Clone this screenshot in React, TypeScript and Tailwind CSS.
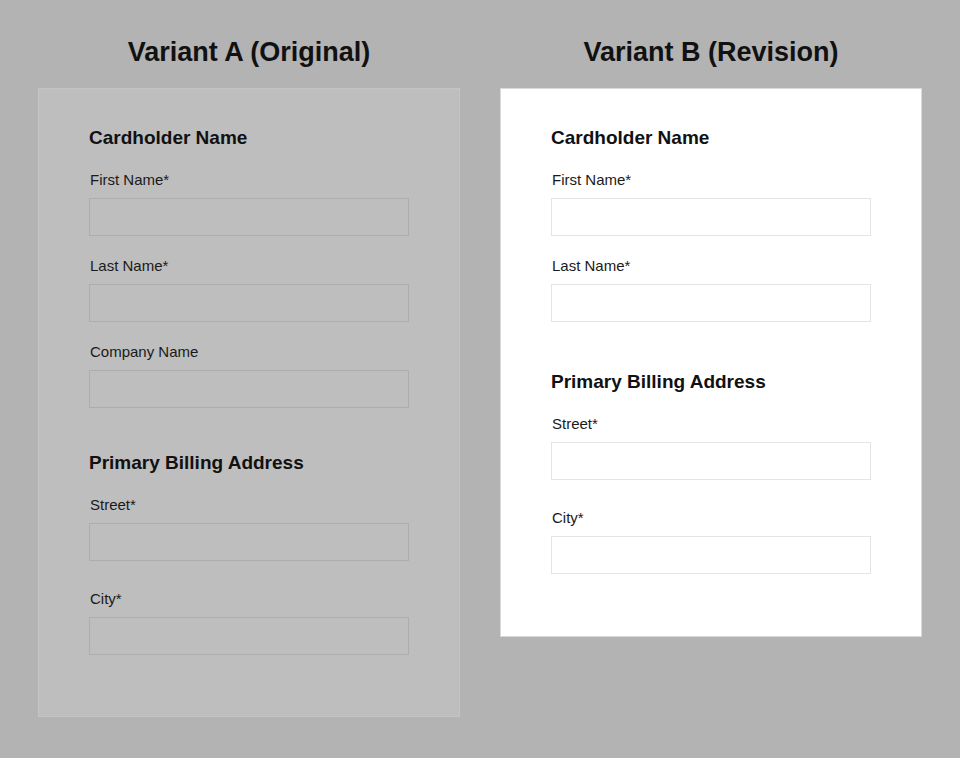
import React from "react";

const font = { fontFamily: '"Liberation Sans", Arial, sans-serif' };

function Field({ label, variant, className = "" }: { label: string; variant: "a" | "b"; className?: string }) {
  return (
    <div className={className}>
      <div className="h-[18px] pl-px text-[15px] leading-[20px] text-[#1a1a1a]">{label}</div>
      <div
        className={
          variant === "a"
            ? "mt-[10px] h-[38px] w-[320px] border border-[#adadad] bg-[#bebebe]"
            : "mt-[10px] h-[38px] w-[320px] border border-[#e4e4e4] bg-white"
        }
      />
    </div>
  );
}

function Heading({ children, className = "" }: { children: React.ReactNode; className?: string }) {
  return <div className={"h-[22px] text-[19px] font-bold leading-[24px] text-[#111] " + className}>{children}</div>;
}

export default function App() {
  return (
    <div className="min-h-[758px] w-[960px] bg-[#b3b3b3]" style={font}>
      <div className="flex gap-[40px] pl-[38px] pt-[37px]">
        <div className="flex w-[422px] flex-col">
          <div className="h-[30px] text-center text-[27px] font-bold leading-[30px] text-[#111]">Variant A (Original)</div>
          <div className="mt-[21px] border border-[#c4c4c4] bg-[#bebebe] px-[50px] pb-[61px] pt-[37px]">
            <Heading>Cardholder Name</Heading>
            <Field label="First Name*" variant="a" className="mt-[22px]" />
            <Field label="Last Name*" variant="a" className="mt-[20px]" />
            <Field label="Company Name" variant="a" className="mt-[20px]" />
            <Heading className="mt-[43px]">Primary Billing Address</Heading>
            <Field label="Street*" variant="a" className="mt-[22px]" />
            <Field label="City*" variant="a" className="mt-[28px]" />
          </div>
        </div>
        <div className="flex w-[422px] flex-col">
          <div className="h-[30px] text-center text-[27px] font-bold leading-[30px] text-[#111]">Variant B (Revision)</div>
          <div className="mt-[21px] border border-[#d9d9d9] bg-white px-[50px] pb-[62px] pt-[37px]">
            <Heading>Cardholder Name</Heading>
            <Field label="First Name*" variant="b" className="mt-[22px]" />
            <Field label="Last Name*" variant="b" className="mt-[20px]" />
            <Heading className="mt-[48px]">Primary Billing Address</Heading>
            <Field label="Street*" variant="b" className="mt-[22px]" />
            <Field label="City*" variant="b" className="mt-[28px]" />
          </div>
        </div>
      </div>
    </div>
  );
}
